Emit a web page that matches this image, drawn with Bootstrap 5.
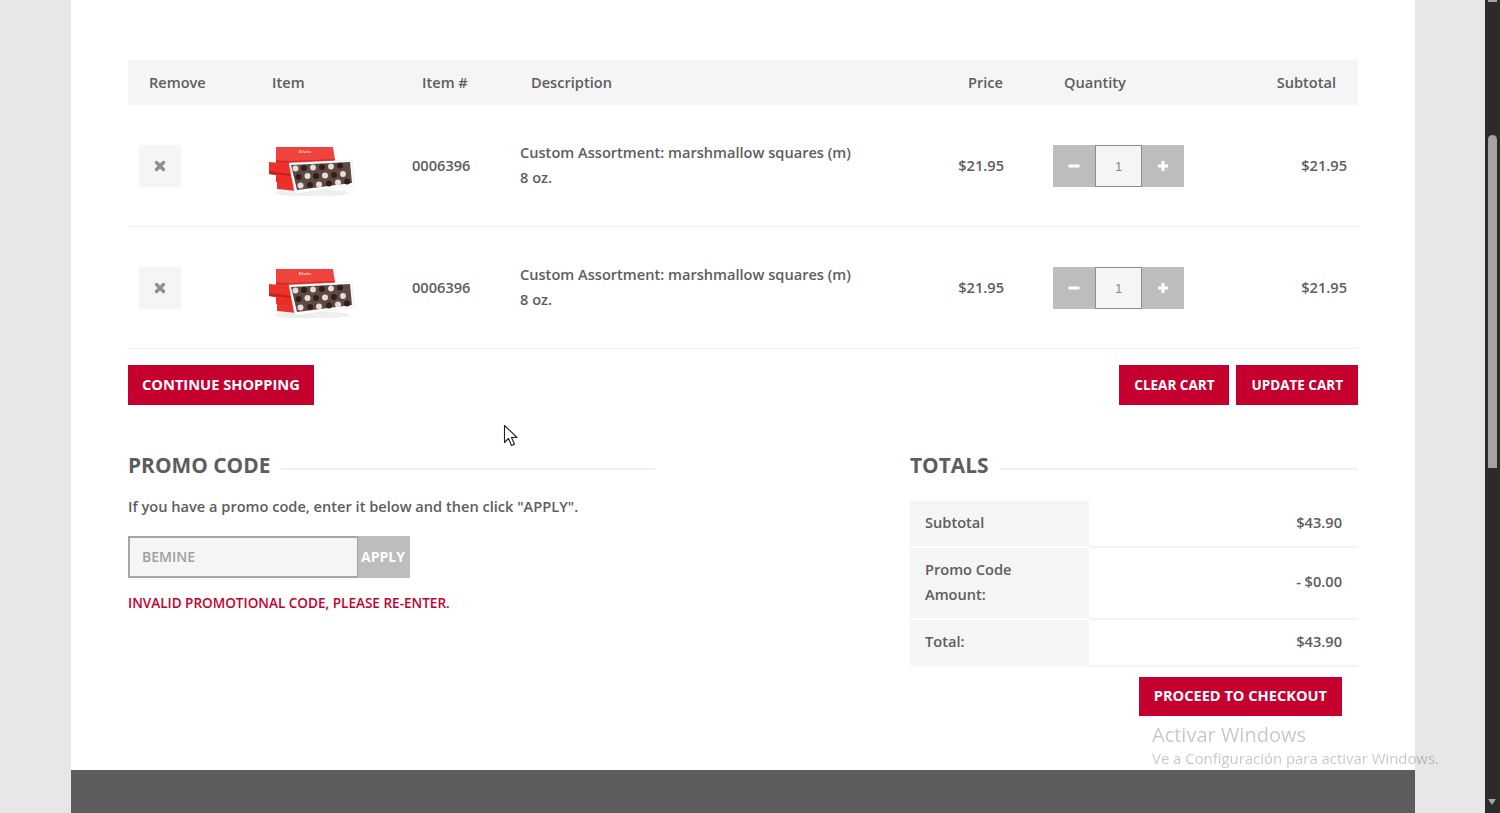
<!DOCTYPE html>
<html lang="en">
<head>
<meta charset="utf-8">
<title>Cart</title>
<link href="https://cdn.jsdelivr.net/npm/bootstrap@5.3.0/dist/css/bootstrap.min.css" rel="stylesheet">
<style>
html,body{height:813px;overflow:hidden}
body{background:#e7e7e7;color:#5d5d5d;font-family:"Open Sans",sans-serif;font-size:14.6px;font-weight:600;line-height:25px}
.shell{height:813px}
.pagearea{width:1485px}
.sheet{width:1344px;margin-left:71px;height:813px;background:#fff}
.inner{padding:60px 57px 0;height:770px}
.foot{height:43px;background:#5d5d5d}
.sbar{width:15px;background:#2b2b2b;position:relative}
.sb-top{position:absolute;left:3px;top:0;width:9px;height:2px;background:#a5a5a5}
.sb-thumb{position:absolute;left:3px;top:135px;width:9px;height:333px;background:#a3a3a3;border-radius:5px 5px 0 0}
.sb-arrow{position:absolute;left:3px;top:799px;border-left:4.5px solid transparent;border-right:4.5px solid transparent;border-top:6px solid #a5a5a5}
.cart{table-layout:fixed;width:1230px;margin:0;--bs-table-color:#5d5d5d;--bs-table-bg:transparent;--bs-table-border-color:#f3f3f3}
.cart th{background:#f5f5f5;height:45px;padding:0 21px;border:0;vertical-align:middle;font-weight:600;color:#5d5d5d;white-space:nowrap}
.cart th.desc{padding-left:22px}
.cart td{height:122px;padding:0 11px;vertical-align:middle;border:0;box-shadow:inset 0 -1px 0 #f1f1f1;font-weight:600;color:#5d5d5d}
.cart td.num{font-weight:550;padding-bottom:2px}
.cart td.txt{padding-bottom:2px}
.c1{width:123px}.c2{width:150px}.c3{width:108px}.c4{width:420px}.c5{width:114px}.c6{width:157px}
.cart th.pr{padding-right:40px;text-align:right}
.cart td.pr{padding-right:39px;text-align:right}
.cart .sub{padding-right:22px;text-align:right}
.cart td.sub{padding-right:11px}
.xbtn{width:42px;height:42px;background:#f5f5f5}
.pic{display:block;margin-left:-2px;filter:blur(.3px)}
.qty-b{width:42px;height:42px;background:#bdbdbd}
.qty-i{width:47px;height:42px;background:#f5f5f5;border:1px solid #8c8c8c;font-family:"Liberation Sans",sans-serif;font-size:13px;font-weight:400;color:#888}
.qtyrow{margin-left:-1px}
.redbtn{background:#c5002e;color:#fff;border:0;border-radius:0;font-weight:700;height:40px;padding:0 14px;font-size:14.65px;--bs-btn-hover-bg:#c5002e;--bs-btn-hover-color:#fff;white-space:nowrap}
.redbtn.sm{font-size:13.5px;padding:0 15px}
.btnpair{gap:7px}
.actions{margin-top:16px}
.lower{margin-top:45px}
.promo{width:527px}
.tot{width:448px}
.head{font-size:20.9px;font-weight:700;line-height:30px;margin:0;white-space:nowrap;color:#5d5d5d}
.rule{height:2px;background:#f1f1f1;margin-top:8px;margin-left:11px}
.intro{margin:14px 0 17px}
.codein{width:230px;height:42px;background:#f5f5f5;border:2px solid #a5a5a5;border-right-width:1px;padding:0 12px 2px;border-radius:0;font-size:14px;font-weight:600;color:#999}
.codein::placeholder{color:#a0a0a0;opacity:1}
.apply{width:52px;height:42px;background:#bdbdbd;color:#fff;border:0;font-size:14px;font-weight:700;padding:0 2px 2px 0}
.err{color:#c5002e;font-size:13.55px;margin-top:13px}
.sumtbl{width:448px;table-layout:fixed;margin:20.5px 0 0;--bs-table-bg:transparent;--bs-table-color:#5d5d5d}
.sumtbl th,.sumtbl td{padding:9px 16px 11px 15px;border-bottom:2px solid #f3f3f3;font-weight:600;color:#5d5d5d;vertical-align:middle}
.sumtbl td.num{font-weight:550}
.sumtbl th{background:#f5f5f5;width:179px;padding-right:30px;border-bottom-color:#fff}
.sumtbl tr:last-child th{border-bottom:0}
.sumtbl td{text-align:right}
.checkout{margin:10.5px 16px 0 0;height:39px;font-size:14.6px;padding:0 15px 2px}
.wm{position:absolute;left:1152px;top:721px;color:#000;opacity:.22;font-weight:400;font-family:"Open Sans",sans-serif;white-space:nowrap;pointer-events:none}
.wm1{font-size:20px;line-height:28px}
.wm2{font-size:14.9px;line-height:20px;margin-top:-1px}
.cursor{position:absolute;left:503px;top:424px}
</style>
</head>
<body>
<svg width="0" height="0" class="position-absolute">
  <defs>
    <symbol id="box" viewBox="260 136 100 60">
      <ellipse cx="312" cy="193" rx="38" ry="3.500" fill="#efefef"/>
      <path d="M277 181l20 3v7l-20-2z" fill="#e8332c"/>
      <path d="M269 162l22 2v13l-22-3z" fill="#ee3029"/>
      <path d="M269 171l22 3v3l-22-3z" fill="#c5211f"/>
      <path d="M276 174l20 3v8l-20-3z" fill="#ec2d27"/>
      <path d="M276 147h57l2 13-46 3-13 1z" fill="#ee443d"/>
      <path d="M276 160l13 1 46-2v2l-46 3-13-1z" fill="#d82a27"/>
      <text x="305" y="153" font-family="Liberation Serif,serif" font-size="4.500" fill="#f9d5c0" text-anchor="middle">Kiwiee</text>
      <path d="M289 163l63-3 2 25-59 9z" fill="#fff" stroke="#dedede" stroke-width=".5"/>
      <path d="M291 165l59-3 2 21-55 7z" fill="#5e4a44"/>
      <g fill="#e4dfd8">
        <circle cx="295.500" cy="168.500" r="2.900"/><circle cx="313" cy="167.500" r="2.900"/><circle cx="331" cy="166.500" r="2.900"/>
        <circle cx="307.500" cy="176" r="3"/><circle cx="325" cy="175.500" r="3"/><circle cx="343" cy="174" r="2.900"/>
        <circle cx="300.500" cy="185.500" r="3"/><circle cx="319" cy="184.500" r="3"/><circle cx="338" cy="182.500" r="3"/>
      </g>
      <g fill="#341d18">
        <circle cx="304" cy="168" r="3"/><circle cx="322" cy="167" r="3"/><circle cx="340" cy="165.800" r="3"/>
        <circle cx="298.500" cy="177" r="3"/><circle cx="316" cy="176" r="3"/><circle cx="334" cy="175" r="3"/>
        <circle cx="310" cy="185" r="3"/><circle cx="329" cy="183.500" r="3"/><circle cx="347" cy="181.500" r="3"/>
      </g>
    </symbol>
  </defs>
</svg>
<div class="shell d-flex">
  <div class="pagearea">
    <div class="sheet d-flex flex-column">
      <main class="inner">
        <table class="table cart">
          <colgroup><col class="c1"><col class="c2"><col class="c3"><col class="c4"><col class="c5"><col class="c6"><col></colgroup>
          <thead>
            <tr><th>Remove</th><th>Item</th><th>Item #</th><th class="desc">Description</th><th class="pr">Price</th><th>Quantity</th><th class="sub">Subtotal</th></tr>
          </thead>
          <tbody>
            <tr>
              <td><div class="xbtn d-flex align-items-center justify-content-center"><svg width="12" height="12" viewBox="0 0 12 12"><path d="M2.500 2.500l7 7M9.500 2.500l-7 7" stroke="#8f8f8f" stroke-width="3.400" stroke-linecap="round"/></svg></div></td>
              <td><svg class="pic" width="100" height="60"><use href="#box"/></svg></td>
              <td class="num">0006396</td>
              <td class="txt">Custom Assortment: marshmallow squares (m)<br>8 oz.</td>
              <td class="pr num">$21.95</td>
              <td><div class="d-flex qtyrow">
                <div class="qty-b d-flex align-items-center justify-content-center"><svg width="12" height="12" viewBox="0 0 12 12"><path d="M.5 6h11" stroke="#fff" stroke-width="3"/></svg></div>
                <div class="qty-i d-flex align-items-center justify-content-center">1</div>
                <div class="qty-b d-flex align-items-center justify-content-center"><svg width="12" height="12" viewBox="0 0 12 12"><path d="M1 6h10M6 1v10" stroke="#fff" stroke-width="3"/></svg></div>
              </div></td>
              <td class="sub num">$21.95</td>
            </tr>
            <tr>
              <td><div class="xbtn d-flex align-items-center justify-content-center"><svg width="12" height="12" viewBox="0 0 12 12"><path d="M2.500 2.500l7 7M9.500 2.500l-7 7" stroke="#8f8f8f" stroke-width="3.400" stroke-linecap="round"/></svg></div></td>
              <td><svg class="pic" width="100" height="60"><use href="#box"/></svg></td>
              <td class="num">0006396</td>
              <td class="txt">Custom Assortment: marshmallow squares (m)<br>8 oz.</td>
              <td class="pr num">$21.95</td>
              <td><div class="d-flex qtyrow">
                <div class="qty-b d-flex align-items-center justify-content-center"><svg width="12" height="12" viewBox="0 0 12 12"><path d="M.5 6h11" stroke="#fff" stroke-width="3"/></svg></div>
                <div class="qty-i d-flex align-items-center justify-content-center">1</div>
                <div class="qty-b d-flex align-items-center justify-content-center"><svg width="12" height="12" viewBox="0 0 12 12"><path d="M1 6h10M6 1v10" stroke="#fff" stroke-width="3"/></svg></div>
              </div></td>
              <td class="sub num">$21.95</td>
            </tr>
          </tbody>
        </table>
        <div class="actions d-flex justify-content-between">
          <button class="btn redbtn" type="button">CONTINUE SHOPPING</button>
          <div class="d-flex btnpair">
            <button class="btn redbtn sm" type="button">CLEAR CART</button>
            <button class="btn redbtn sm" type="button">UPDATE CART</button>
          </div>
        </div>
        <div class="lower d-flex justify-content-between">
          <section class="promo">
            <div class="d-flex align-items-center"><h2 class="head">PROMO CODE</h2><div class="rule flex-grow-1"></div></div>
            <p class="intro">If you have a promo code, enter it below and then click "APPLY".</p>
            <div class="d-flex">
              <input class="codein" type="text" placeholder="BEMINE" aria-label="Promo code">
              <button class="apply" type="button">APPLY</button>
            </div>
            <div class="err">INVALID PROMOTIONAL CODE, PLEASE RE-ENTER.</div>
          </section>
          <section class="tot">
            <div class="d-flex align-items-center"><h2 class="head">TOTALS</h2><div class="rule flex-grow-1"></div></div>
            <table class="table sumtbl">
              <tbody>
                <tr><th>Subtotal</th><td class="num">$43.90</td></tr>
                <tr><th>Promo Code Amount:</th><td class="num">- $0.00</td></tr>
                <tr><th>Total:</th><td class="num">$43.90</td></tr>
              </tbody>
            </table>
            <div class="d-flex justify-content-end">
              <button class="btn redbtn checkout" type="button">PROCEED TO CHECKOUT</button>
            </div>
          </section>
        </div>
      </main>
      <footer class="foot"></footer>
    </div>
  </div>
  <div class="sbar"><div class="sb-top"></div><div class="sb-thumb"></div><div class="sb-arrow"></div></div>
</div>
<div class="wm"><div class="wm1">Activar Windows</div><div class="wm2">Ve a Configuración para activar Windows.</div></div>
<svg class="cursor" width="16" height="24" viewBox="0 0 16 24"><path d="M1.500 1.500v17l4-4 3 7 3-1.300-3-6.700h5.500z" fill="#fff" stroke="#222" stroke-width="1.100" stroke-linejoin="round"/></svg>
<script src="https://cdn.jsdelivr.net/npm/bootstrap@5.3.0/dist/js/bootstrap.bundle.min.js"></script>
</body>
</html>
